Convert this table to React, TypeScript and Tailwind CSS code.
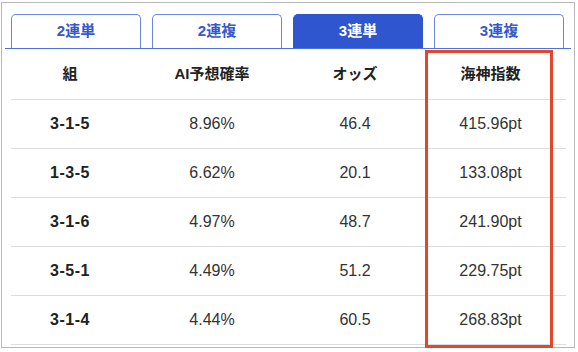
import React from "react";

const tabs = [
  { label: "2連単", active: false },
  { label: "2連複", active: false },
  { label: "3連単", active: true },
  { label: "3連複", active: false },
];

const rows = [
  ["3-1-5", "8.96%", "46.4", "415.96pt"],
  ["1-3-5", "6.62%", "20.1", "133.08pt"],
  ["3-1-6", "4.97%", "48.7", "241.90pt"],
  ["3-5-1", "4.49%", "51.2", "229.75pt"],
  ["3-1-4", "4.44%", "60.5", "268.83pt"],
];

export default function App() {
  return (
    <div
      className="w-[578px] h-[352px] bg-white pt-[2px] pl-[1px] overflow-hidden"
      style={{ fontFamily: '"Liberation Sans", "Noto Sans CJK JP", sans-serif' }}
    >
      <div className="relative w-[574px] h-[346px] border border-[#b8b8b8]">
        <div className="mx-[3px] mt-[11px] flex gap-[11px] px-[6px] border-b border-[#4f6fdc]">
          {tabs.map((t) => (
            <div
              key={t.label}
              className={
                t.active
                  ? "w-[130px] h-[34px] flex items-center justify-center rounded-t-[5px] border border-b-0 border-[#2f55cf] bg-[#2f55cf] text-white text-[15px] font-bold"
                  : "w-[130px] h-[34px] flex items-center justify-center rounded-t-[5px] border border-b-0 border-[#6b86e3] bg-white text-[#3358d0] text-[15px] font-bold"
              }
            >
              {t.label}
            </div>
          ))}
        </div>
        <div className="ml-[9px] w-[555px]">
          <div className="flex h-[51px] items-center border-b border-[#dcdde1] text-[15px] font-bold text-[#222]">
            <div className="w-[118px] text-center">組</div>
            <div className="w-[166px] text-center">AI予想確率</div>
            <div className="w-[120px] text-center">オッズ</div>
            <div className="w-[151px] text-center">海神指数</div>
          </div>
          {rows.map((r) => (
            <div
              key={r[0]}
              className="flex h-[49px] items-center border-b border-[#dcdde1] text-[16px] text-[#333]"
            >
              <div className="w-[118px] text-center font-bold text-[#222] tracking-[0.5px]">{r[0]}</div>
              <div className="w-[166px] text-center">{r[1]}</div>
              <div className="w-[120px] text-center">{r[2]}</div>
              <div className="w-[151px] text-center">{r[3]}</div>
            </div>
          ))}
        </div>
        <div className="absolute left-[423px] top-[47px] w-[128px] h-[298px] border-[3px] border-[#e2472a] pointer-events-none" />
      </div>
    </div>
  );
}
